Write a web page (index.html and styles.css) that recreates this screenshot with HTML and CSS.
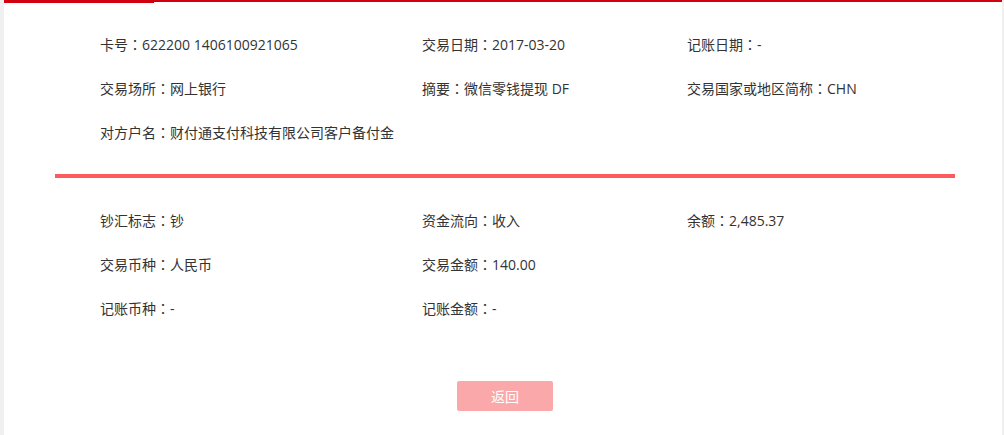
FILE: index.html
```html
<!DOCTYPE html>
<html lang="zh-CN">
<head>
    <meta charset="UTF-8">
    <meta name="viewport" content="width=device-width, initial-scale=1">
    <title>交易明细</title>
    <link rel="stylesheet" href="styles.css">
</head>
<body>

<div class="page">
    <div class="tabs">
        <div class="tab-active"></div>
        <div class="tab-rest"></div>
    </div>

    <div class="detail">
        <div class="info-grid">
            <div class="item">卡号<span class="sep" lang="ja">：</span>622200 1406100921065</div>
            <div class="item">交易日期<span class="sep" lang="ja">：</span>2017-03-20</div>
            <div class="item">记账日期<span class="sep" lang="ja">：</span>-</div>

            <div class="item">交易场所<span class="sep" lang="ja">：</span>网上银行</div>
            <div class="item">摘要<span class="sep" lang="ja">：</span>微信零钱提现 DF</div>
            <div class="item">交易国家或地区简称<span class="sep" lang="ja">：</span>CHN</div>

            <div class="item">对方户名<span class="sep" lang="ja">：</span>财付通支付科技有限公司客户备付金</div>
        </div>

        <div class="divider"></div>

        <div class="info-grid second">
            <div class="item">钞汇标志<span class="sep" lang="ja">：</span>钞</div>
            <div class="item">资金流向<span class="sep" lang="ja">：</span>收入</div>
            <div class="item">余额<span class="sep" lang="ja">：</span>2,485.37</div>

            <div class="item">交易币种<span class="sep" lang="ja">：</span>人民币</div>
            <div class="item">交易金额<span class="sep" lang="ja">：</span>140.00</div>
            <div class="item"></div>

            <div class="item">记账币种<span class="sep" lang="ja">：</span>-</div>
            <div class="item">记账金额<span class="sep" lang="ja">：</span>-</div>
        </div>

        <div class="actions">
            <button class="button" id="back">返回</button>
        </div>
    </div>
</div>

</body>
</html>
```

FILE: styles.css
```css
html, body {
    height: 100%;
}
body {
    font-family: "Open Sans", "Noto Sans CJK SC", sans-serif;
    margin: 0;
    padding: 0 2px 0 4px;
    background-color: #f0f0f0;
    color: #333;
    font-size: 14px;
}
.page {
    background-color: #fff;
    min-height: 100%;
}
.tabs {
    display: flex;
    align-items: flex-start;
}
.tab-active {
    width: 150px;
    height: 3px;
    background-color: #d0000f;
}
.tab-rest {
    flex: 1;
    height: 2px;
    background-color: #d0000f;
}
.detail {
    padding: 19px 47px 0 51px;
}
.info-grid {
    display: grid;
    grid-template-columns: 322px 265px 1fr;
    padding-left: 45px;
}
.item {
    height: 44px;
    line-height: 44px;
    white-space: nowrap;
}
/* full-width colon centered, like YaHei */
.sep {
    font-family: "Noto Sans CJK JP", sans-serif;
}
.divider {
    height: 4px;
    margin-top: 20px;
    background-color: #ff5a5f;
}
.second {
    margin-top: 20px;
}
.actions {
    text-align: center;
    padding-top: 51px;
}
.button {
    width: 96px;
    height: 30px;
    font-family: inherit;
    font-size: 14px;
    color: #fff;
    background-color: #fba8aa;
    border: none;
    border-radius: 2px;
    cursor: pointer;
}
```
